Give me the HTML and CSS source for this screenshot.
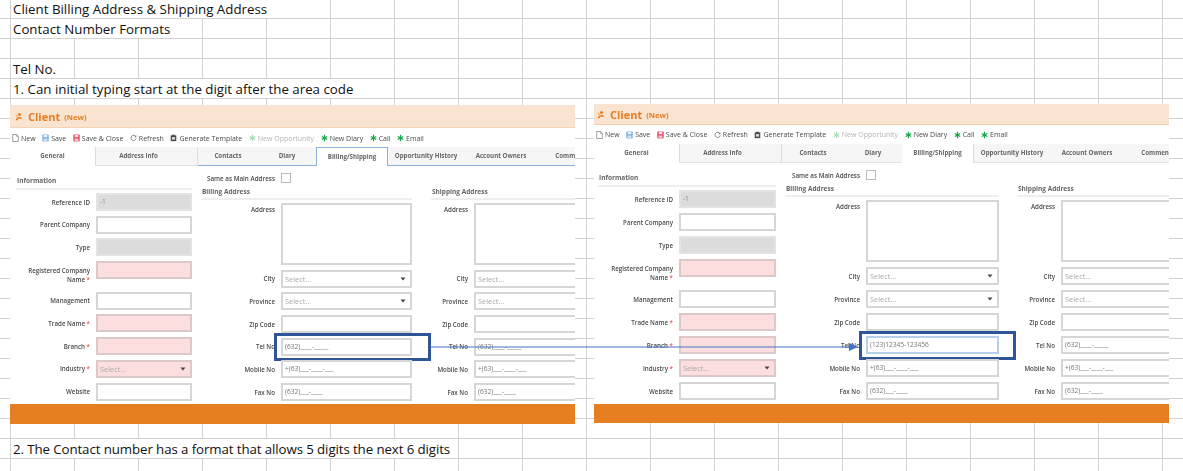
FILE: index.html
```html
<!DOCTYPE html>
<html lang="en">
<head>
  <meta charset="UTF-8" />
  <title>Contact Number Formats</title>
  <link rel="stylesheet" href="styles.css">
</head>
<body>
  <svg class="icon-defs" width="0" height="0">
    <symbol id="i-client" viewBox="0 0 10 10">
      <circle cx="5.6" cy="2.6" r="1.9" fill="#e67e22"/>
      <path d="M1 9.6c.3-2.6 2-4 4.4-4 1.6 0 2.8.6 3.6 1.6L7.4 8.2C6.6 7.6 5.6 7.4 4.6 7.6 3.8 7.9 3.4 8.6 3.2 9.6z" fill="#e67e22"/>
      <path d="M1 3.4l2 1.6" stroke="#e67e22" stroke-width="1.2"/>
    </symbol>
    <symbol id="i-new" viewBox="0 0 8 9">
      <path d="M.8.5h4.4l2 2v6H.8z" fill="#fff" stroke="#777" stroke-width=".8"/>
      <path d="M5 .5v2.2h2.2" fill="none" stroke="#777" stroke-width=".6"/>
    </symbol>
    <symbol id="i-save" viewBox="0 0 8 9">
      <rect x=".3" y=".5" width="7.4" height="8" rx=".8" fill="#7fb2e0"/>
      <rect x="2" y="1" width="4" height="2.6" fill="#e8f2fb"/>
      <rect x="1.8" y="5.2" width="4.4" height="3.2" fill="#cfe2f4"/>
    </symbol>
    <symbol id="i-save-close" viewBox="0 0 8 9">
      <rect x=".3" y=".5" width="7.4" height="8" rx=".8" fill="#e2506a"/>
      <rect x="2" y="1" width="4" height="2.6" fill="#fbe3e7"/>
      <rect x="1.8" y="5.2" width="4.4" height="3.2" fill="#f6c6cf"/>
    </symbol>
    <symbol id="i-refresh" viewBox="0 0 8 8">
      <path d="M6.6 2.2A3 3 0 1 0 7 4.6" fill="none" stroke="#666" stroke-width=".9"/>
      <path d="M7.2.8v2.2H5z" fill="#666"/>
    </symbol>
    <symbol id="i-template" viewBox="0 0 8 8">
      <rect x=".8" y="1" width="6.4" height="6.6" fill="#4b4b4b"/>
      <rect x="2.6" y=".2" width="2.8" height="1.6" fill="#4b4b4b"/>
      <rect x="2.2" y="3" width="3.6" height="2.8" fill="#ddd"/>
    </symbol>
    <symbol id="i-star" viewBox="0 0 8 8">
      <path d="M4 .4v7.2M.9 2.2l6.2 3.6M7.1 2.2L.9 5.8" stroke="currentColor" stroke-width="1.4"/>
    </symbol>
    <symbol id="i-caret" viewBox="0 0 6 4">
      <path d="M.5.5h5L3 3.5z" fill="#444"/>
    </symbol>
  </svg>

  <div class="sheet">
    <div class="sheet-row"><span class="cell cell-w5">Client Billing Address &amp; Shipping Address</span></div>
    <div class="sheet-row"><span class="cell cell-w3">Contact Number Formats</span></div>
    <div class="sheet-row"></div>
    <div class="sheet-row"><span class="cell cell-w1">Tel No.</span></div>
    <div class="sheet-row"><span class="cell cell-w6">1. Can initial typing start at the digit after the area code</span></div>

    <div class="shots">
      <section class="panel panel-before">
        <div class="panel-head">
          <svg class="head-icon"><use href="#i-client"/></svg>
          <span class="head-title">Client</span>
          <span class="head-state">(New)</span>
        </div>
        <div class="toolbar">
          <span class="tool"><svg class="tool-icon"><use href="#i-new"/></svg>New</span>
          <span class="tool"><svg class="tool-icon"><use href="#i-save"/></svg>Save</span>
          <span class="tool"><svg class="tool-icon"><use href="#i-save-close"/></svg>Save &amp; Close</span>
          <span class="tool"><svg class="tool-icon"><use href="#i-refresh"/></svg>Refresh</span>
          <span class="tool"><svg class="tool-icon"><use href="#i-template"/></svg>Generate Template</span>
          <span class="tool tool-off"><svg class="tool-icon"><use href="#i-star"/></svg>New Opportunity</span>
          <span class="tool tool-on"><svg class="tool-icon"><use href="#i-star"/></svg><em>New Diary</em></span>
          <span class="tool tool-on"><svg class="tool-icon"><use href="#i-star"/></svg><em>Call</em></span>
          <span class="tool tool-on"><svg class="tool-icon"><use href="#i-star"/></svg><em>Email</em></span>
        </div>
        <div class="tabs">
          <span class="tab tab-first">General</span>
          <span class="tab tab-address">Address Info</span>
          <span class="tab tab-line tab-contacts">Contacts</span>
          <span class="tab tab-line tab-diary">Diary</span>
          <span class="tab tab-current">Billing/Shipping</span>
          <span class="tab tab-line tab-history">Opportunity History</span>
          <span class="tab tab-line tab-owners">Account Owners</span>
          <span class="tab tab-line tab-comments">Comments</span>
        </div>
        <div class="form">
          <div class="col col-info">
            <h3 class="section section-info">Information</h3>
            <div class="field"><label>Reference ID</label><div class="box box-grey">-1</div></div>
            <div class="field"><label>Parent Company</label><div class="box"></div></div>
            <div class="field"><label>Type</label><div class="box box-grey"></div></div>
            <div class="field field-tall"><label>Registered Company<br>Name <b>*</b></label><div class="box box-req"></div></div>
            <div class="field"><label>Management</label><div class="box"></div></div>
            <div class="field"><label>Trade Name <b>*</b></label><div class="box box-req"></div></div>
            <div class="field"><label>Branch <b>*</b></label><div class="box box-req"></div></div>
            <div class="field"><label>Industry <b>*</b></label><div class="box box-req box-select">Select...<svg class="caret"><use href="#i-caret"/></svg></div></div>
            <div class="field"><label>Website</label><div class="box"></div></div>
          </div>
          <div class="col col-billing">
            <div class="same-row"><span>Same as Main Address</span><i class="check"></i></div>
            <h3 class="section">Billing Address</h3>
            <div class="field field-area"><label>Address</label><div class="box box-area"></div></div>
            <div class="field"><label>City</label><div class="box box-select">Select...<svg class="caret"><use href="#i-caret"/></svg></div></div>
            <div class="field"><label>Province</label><div class="box box-select">Select...<svg class="caret"><use href="#i-caret"/></svg></div></div>
            <div class="field"><label>Zip Code</label><div class="box"></div></div>
            <div class="field"><label>Tel No</label><div class="box box-mask">(632)____-_____<span class="mark"></span></div></div>
            <div class="field"><label>Mobile No</label><div class="box box-mask">+(63)___-____-___</div></div>
            <div class="field"><label>Fax No</label><div class="box box-mask">(632)___-____</div></div>
          </div>
          <div class="col col-shipping">
            <div class="same-row"></div>
            <h3 class="section">Shipping Address</h3>
            <div class="field field-area"><label>Address</label><div class="box box-area"></div></div>
            <div class="field"><label>City</label><div class="box box-select">Select...</div></div>
            <div class="field"><label>Province</label><div class="box box-select">Select...</div></div>
            <div class="field"><label>Zip Code</label><div class="box"></div></div>
            <div class="field"><label>Tel No</label><div class="box box-mask">(632)____-_____</div></div>
            <div class="field"><label>Mobile No</label><div class="box box-mask">+(63)___-____-___</div></div>
            <div class="field"><label>Fax No</label><div class="box box-mask">(632)___-____</div></div>
          </div>
        </div>
        <div class="panel-foot"></div>
      </section>

      <section class="panel panel-after">
        <div class="panel-head">
          <svg class="head-icon"><use href="#i-client"/></svg>
          <span class="head-title">Client</span>
          <span class="head-state">(New)</span>
        </div>
        <div class="toolbar">
          <span class="tool"><svg class="tool-icon"><use href="#i-new"/></svg>New</span>
          <span class="tool"><svg class="tool-icon"><use href="#i-save"/></svg>Save</span>
          <span class="tool"><svg class="tool-icon"><use href="#i-save-close"/></svg>Save &amp; Close</span>
          <span class="tool"><svg class="tool-icon"><use href="#i-refresh"/></svg>Refresh</span>
          <span class="tool"><svg class="tool-icon"><use href="#i-template"/></svg>Generate Template</span>
          <span class="tool tool-off"><svg class="tool-icon"><use href="#i-star"/></svg>New Opportunity</span>
          <span class="tool tool-on"><svg class="tool-icon"><use href="#i-star"/></svg><em>New Diary</em></span>
          <span class="tool tool-on"><svg class="tool-icon"><use href="#i-star"/></svg><em>Call</em></span>
          <span class="tool tool-on"><svg class="tool-icon"><use href="#i-star"/></svg><em>Email</em></span>
        </div>
        <div class="tabs">
          <span class="tab tab-first">General</span>
          <span class="tab tab-address">Address Info</span>
          <span class="tab tab-contacts">Contacts</span>
          <span class="tab tab-diary">Diary</span>
          <span class="tab tab-plain-current">Billing/Shipping</span>
          <span class="tab tab-history">Opportunity History</span>
          <span class="tab tab-owners">Account Owners</span>
          <span class="tab tab-comments">Comments</span>
        </div>
        <div class="form">
          <div class="col col-info">
            <h3 class="section section-info">Information</h3>
            <div class="field"><label>Reference ID</label><div class="box box-grey">-1</div></div>
            <div class="field"><label>Parent Company</label><div class="box"></div></div>
            <div class="field"><label>Type</label><div class="box box-grey"></div></div>
            <div class="field field-tall"><label>Registered Company<br>Name <b>*</b></label><div class="box box-req"></div></div>
            <div class="field"><label>Management</label><div class="box"></div></div>
            <div class="field"><label>Trade Name <b>*</b></label><div class="box box-req"></div></div>
            <div class="field"><label>Branch <b>*</b></label><div class="box box-req"></div></div>
            <div class="field"><label>Industry <b>*</b></label><div class="box box-req box-select">Select...<svg class="caret"><use href="#i-caret"/></svg></div></div>
            <div class="field"><label>Website</label><div class="box"></div></div>
          </div>
          <div class="col col-billing">
            <div class="same-row"><span>Same as Main Address</span><i class="check"></i></div>
            <h3 class="section">Billing Address</h3>
            <div class="field field-area"><label>Address</label><div class="box box-area"></div></div>
            <div class="field"><label>City</label><div class="box box-select">Select...<svg class="caret"><use href="#i-caret"/></svg></div></div>
            <div class="field"><label>Province</label><div class="box box-select">Select...<svg class="caret"><use href="#i-caret"/></svg></div></div>
            <div class="field"><label>Zip Code</label><div class="box"></div></div>
            <div class="field"><label>Tel No</label><div class="box box-mask box-focus">(123)12345-123456<span class="mark"></span></div></div>
            <div class="field"><label>Mobile No</label><div class="box box-mask">+(63)___-____-___</div></div>
            <div class="field"><label>Fax No</label><div class="box box-mask">(632)___-____</div></div>
          </div>
          <div class="col col-shipping">
            <div class="same-row"></div>
            <h3 class="section">Shipping Address</h3>
            <div class="field field-area"><label>Address</label><div class="box box-area"></div></div>
            <div class="field"><label>City</label><div class="box box-select">Select...</div></div>
            <div class="field"><label>Province</label><div class="box box-select">Select...</div></div>
            <div class="field"><label>Zip Code</label><div class="box"></div></div>
            <div class="field"><label>Tel No</label><div class="box box-mask">(632)____-_____</div></div>
            <div class="field"><label>Mobile No</label><div class="box box-mask">+(63)___-____-___</div></div>
            <div class="field"><label>Fax No</label><div class="box box-mask">(632)___-____</div></div>
          </div>
        </div>
        <div class="panel-foot"></div>
      </section>
    </div>

    <div class="sheet-row sheet-row-last"><span class="cell cell-w7">2. The Contact number has a format that allows 5 digits the next 6 digits</span></div>

    <svg class="arrow" width="430" height="10" viewBox="0 0 430 10">
      <path d="M0 5H420" stroke="#4472c4" stroke-width="1"/>
      <path d="M419 1l9 4-9 4z" fill="#4472c4"/>
    </svg>
  </div>
</body>
</html>
```

FILE: styles.css
```css
html, body {
  margin: 0;
  height: 471px;
  overflow: hidden;
}

body {
  font-family: "Open Sans", "Noto Sans", sans-serif;
  color: #111;
  background-color: #fff;
  background-image:
    linear-gradient(#d2d2d2 1px, transparent 1px),
    linear-gradient(90deg, #d2d2d2 1px, transparent 1px);
  background-size: 64px 20px;
  background-position: 10px 18px;
}

.icon-defs {
  display: block;
  height: 0;
}

/* spreadsheet text rows */
.sheet {
  position: relative;
  margin-top: -1px;
}

.sheet-row {
  height: 20px;
}

.cell {
  display: block;
  height: 19px;
  margin-left: 11px;
  padding-left: 2px;
  box-sizing: border-box;
  background: #fff;
  font-size: 13.3px;
  line-height: 21px;
  white-space: nowrap;
}

.cell-w1 { width: 63px; }
.cell-w3 { width: 191px; }
.cell-w5 { width: 319px; }
.cell-w6 { width: 383px; }
.cell-w7 { width: 447px; letter-spacing: -0.1px; }

.sheet-row-last {
  margin-top: 15px;
}

/* the two pasted screenshots */
.shots {
  display: flex;
  align-items: flex-start;
  gap: 19px;
  margin: 5px 0 0 10px;
}

.panel {
  display: flex;
  flex-direction: column;
  height: 319px;
  overflow: hidden;
  background: #fff;
  color: #4a4a4a;
  filter: blur(0.3px);
}

.panel-before {
  width: 565px;
  margin-top: 1px;
  --gap: 4.7px;
  --label-w: 74px;
  --label-w-small: 37px;
}

.panel-after {
  width: 575px;
  --gap: 5px;
  --label-w: 75px;
  --label-w-small: 38px;
}

.panel-head {
  display: flex;
  align-items: center;
  flex: none;
  box-sizing: border-box;
  background: #f9e4d2;
  color: #e67e22;
  font-weight: 700;
}

.panel-before .panel-head {
  height: 23px;
  padding-left: 5px;
  border-bottom: 1px solid #f5d4b6;
}

.panel-after .panel-head {
  height: 21px;
  padding-left: 3px;
  border-bottom: 1px solid #f5cfa9;
}

.head-icon {
  width: 8px;
  height: 9px;
  margin-right: 5px;
}

.head-title {
  font-size: 11px;
}

.head-state {
  margin-left: 4px;
  font-size: 7.6px;
  padding-top: 2px;
}

.toolbar {
  display: flex;
  align-items: center;
  flex: none;
  box-sizing: border-box;
  height: 19px;
  padding-left: 2px;
  font-size: 7px;
  white-space: nowrap;
}

.panel-before .toolbar {
  padding-top: 1px;
}

.tool {
  display: flex;
  align-items: center;
  margin-right: 6.5px;
}

.tool em {
  font-style: normal;
  color: #4a4a4a;
}

.tool-icon {
  width: 7px;
  height: 8px;
  margin-right: 2px;
}

.tool-off {
  color: #b5b5b5;
}

.tool-off .tool-icon {
  color: #a4dcb4;
}

.tool-on {
  color: #1aa64a;
}

.tabs {
  display: flex;
  flex: none;
  height: 19px;
  background: #f6f6f6;
  font-size: 6.2px;
  font-weight: 700;
  color: #666;
  white-space: nowrap;
}

.tab {
  box-sizing: border-box;
  line-height: 18px;
  text-align: center;
  flex: none;
  border-bottom: 1px solid #e4e4e4;
}

.tab-first { width: 86px; background: #fff; border-right: 1px solid #ddd; border-bottom: 0; }
.tab-address { width: 102px; padding-right: 16px; border-right: 1px solid #ddd; }
.tab-contacts { width: 62px; }
.tab-diary { width: 58px; }
.tab-current { width: 72px; background: #fff; border: 1px solid #8db0d6; border-bottom: 0; }
.tab-plain-current { width: 72px; background: #fff; border-right: 1px solid #ddd; border-bottom: 0; }
.tab-history { width: 76px; }
.tab-owners { width: 74px; }
.tab-comments { width: 68px; }

.panel-before .tab-contacts { width: 60px; }

.tabs .tab-line {
  border-bottom: 1px solid #8db0d6;
}

.form {
  display: grid;
  flex: 1;
  min-height: 0;
  overflow: hidden;
  column-gap: 9px;
}

.panel-before .form {
  grid-template-columns: 176px 211px 154px;
  padding-left: 6px;
}

.panel-after .form {
  grid-template-columns: 178px 214px 162px;
  padding-left: 4px;
}

.panel-before .col-shipping {
  margin-left: 10px;
}

.panel-after .col-shipping {
  margin-left: 9px;
}

.col-info {
  padding-top: 6px;
}

.col-billing,
.col-shipping {
  padding-top: 7px;
}

.section {
  margin: 0 0 3px;
  box-sizing: border-box;
  height: 17px;
  padding-left: 1px;
  border-bottom: 2px solid #eee;
  font-size: 6.5px;
  font-weight: 700;
  line-height: 18px;
  color: #666;
}

.section-info {
  height: 18px;
  line-height: 18px;
}

.same-row {
  display: grid;
  grid-template-columns: var(--label-w) 10px;
  column-gap: 6px;
  align-items: center;
  height: 10px;
  font-size: 6.3px;
  font-weight: 600;
  white-space: nowrap;
}

.same-row span {
  justify-self: end;
}

.check {
  box-sizing: border-box;
  height: 10px;
  border: 1px solid #bbb;
}

.field {
  display: grid;
  grid-template-columns: var(--label-w) 1fr;
  column-gap: 6px;
  align-items: center;
  margin-bottom: var(--gap);
  font-size: 6.2px;
  font-weight: 600;
}

.col-shipping .field {
  grid-template-columns: var(--label-w-small) 1fr;
  margin-right: -3px;
}

.field label {
  text-align: right;
  line-height: 9px;
}

.field label b {
  color: #e33;
  font-weight: 400;
}

.field-tall {
  height: 26px;
  align-items: start;
}

.field-tall label {
  margin-top: 5px;
}

.field-area {
  align-items: start;
}

.field-area label {
  margin-top: 2px;
}

.box {
  position: relative;
  box-sizing: border-box;
  height: 18px;
  padding-left: 2px;
  border: 2px solid #d6d6d6;
  background: #fff;
  font-size: 6.6px;
  font-weight: 400;
  line-height: 14px;
  color: #888;
  white-space: nowrap;
}

.box-grey {
  background: #dcdcdc;
  border-color: #e4e4e4;
}

.box-req {
  background: #fddede;
  border-color: #dcc8c8;
}

.box-area {
  height: 62px;
}

.box-select {
  font-size: 7.4px;
  color: #aaa;
}

.box-mask {
  color: #777;
}

.box-focus {
  border-color: #b4d0ea;
}

.caret {
  position: absolute;
  right: 4px;
  top: 5px;
  width: 6px;
  height: 4px;
}

/* dark blue rectangles drawn over the Tel No inputs */
.mark {
  position: absolute;
  top: -7px;
  bottom: -7px;
  left: -9px;
  right: -21px;
  border: 3px solid #2f5597;
}

.panel-after .mark {
  bottom: -8px;
  right: -19px;
}

.arrow {
  position: absolute;
  left: 430px;
  top: 343px;
}

.panel-foot {
  flex: none;
  background: #e67e22;
}

.panel-before .panel-foot {
  height: 20px;
}

.panel-after .panel-foot {
  height: 19px;
}
```
